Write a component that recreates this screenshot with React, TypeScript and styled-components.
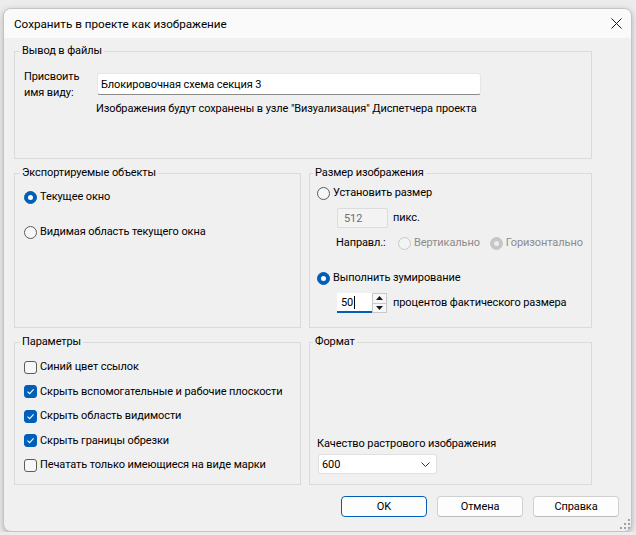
import styled, { createGlobalStyle } from 'styled-components'

const GlobalStyle = createGlobalStyle`
  html, body {
    margin: 0;
    padding: 0;
    background: #ececec;
    font-family: Roboto, "Noto Sans", sans-serif;
    font-size: 11px;
    letter-spacing: -0.1px;
    color: #000;
  }
  * { box-sizing: border-box; }
`

const Window = styled.div`
  position: relative;
  margin: 8px 0 0 3px;
  width: 629px;
  height: 524px;
  border: 1px solid #c4c4c4;
  border-radius: 8px;
  overflow: hidden;
  background: #f0f0f0;
  box-shadow: 0 2px 6px rgba(0, 0, 0, 0.25);
  display: flex;
  flex-direction: column;
`

const TitleBar = styled.div`
  height: 29px;
  background: #fafafa;
  display: flex;
  align-items: center;
  justify-content: space-between;
  padding: 0 9px 0 10px;
`

const Title = styled.span`
  font-size: 11.7px;
  letter-spacing: 0;
  line-height: 16px;
`

const CloseBtn = styled.div`
  width: 12px;
  height: 12px;
  display: flex;
  align-items: center;
  justify-content: center;
`

const Body = styled.div`
  padding: 6px 12px 0 10px;
  display: flex;
  flex-direction: column;
`

const Groups = styled.div`
  width: 578px;
  display: flex;
  flex-direction: column;
  gap: 7px;
`

const Grid = styled.div`
  display: grid;
  grid-template-columns: 287px 283px;
  grid-template-rows: 162px 150px;
  column-gap: 8px;
  row-gap: 7px;
`

const Group = styled.fieldset<{ $h?: number; $pl?: number; $pt?: number }>`
  margin: 0;
  padding: ${p => p.$pt ?? 0}px 8px 0 ${p => p.$pl ?? 9}px;
  border: 1px solid #dadada;
  min-width: 0;
  height: ${p => (p.$h ? `${p.$h}px` : '100%')};
`

const Legend = styled.legend`
  padding: 0 2px;
  margin-left: -4px;
  line-height: 14px;
  font-size: 11px;
`

const NameRow = styled.div`
  display: flex;
  align-items: flex-start;
`

const NameLabel = styled.div`
  width: 73px;
  line-height: 16px;
`

const TextInput = styled.div`
  margin-top: 4px;
  width: 384px;
  height: 22px;
  background: #fff;
  border: 1px solid #e6e6e6;
  border-bottom-color: #8a8a8a;
  border-radius: 3px;
  padding-left: 3px;
  display: flex;
  align-items: center;
`

const Note = styled.div`
  margin-left: 72px;
  line-height: 16px;
`

const Option = styled.label<{ $mt?: number; $ml?: number; $disabled?: boolean }>`
  display: flex;
  align-items: center;
  gap: 3px;
  height: 16px;
  line-height: 16px;
  margin-top: ${p => p.$mt ?? 0}px;
  margin-left: ${p => p.$ml ?? 0}px;
  color: ${p => (p.$disabled ? '#8c8c8c' : '#000')};
  white-space: nowrap;
`

const RadioMark = styled.span<{ $on?: boolean; $disabled?: boolean }>`
  width: 13px;
  height: 13px;
  flex: none;
  border-radius: 50%;
  display: flex;
  align-items: center;
  justify-content: center;
  border: 1px solid
    ${p => (p.$on ? (p.$disabled ? '#c6c6c6' : '#005fb8') : p.$disabled ? '#c8c8c8' : '#5c5c5c')};
  background: ${p => (p.$on ? (p.$disabled ? '#c6c6c6' : '#005fb8') : p.$disabled ? '#f3f3f3' : '#f7f7f7')};
  &::after {
    content: '';
    display: ${p => (p.$on ? 'block' : 'none')};
    width: 5px;
    height: 5px;
    border-radius: 50%;
    background: ${p => (p.$disabled ? '#ececec' : '#fff')};
  }
`

const CheckMark = styled.span<{ $on?: boolean }>`
  width: 13px;
  height: 13px;
  flex: none;
  border-radius: 3px;
  display: flex;
  align-items: center;
  justify-content: center;
  border: 1px solid ${p => (p.$on ? '#005fb8' : '#5c5c5c')};
  background: ${p => (p.$on ? '#005fb8' : '#f7f7f7')};
`

const Row = styled.div<{ $mt?: number; $ml?: number }>`
  display: flex;
  align-items: center;
  margin-top: ${p => p.$mt ?? 0}px;
  margin-left: ${p => p.$ml ?? 0}px;
`

const DisabledBox = styled.div`
  width: 51px;
  height: 20px;
  border: 1px solid #dcdcdc;
  border-radius: 2px;
  background: #f3f3f3;
  color: #6d6d6d;
  padding-left: 6px;
  display: flex;
  align-items: center;
`

const Text = styled.span<{ $ml?: number; $w?: number }>`
  margin-left: ${p => p.$ml ?? 0}px;
  width: ${p => (p.$w ? `${p.$w}px` : 'auto')};
  line-height: 16px;
  white-space: nowrap;
`

const Radios = styled.div`
  display: flex;
  gap: 10px;
`

const SpinInput = styled.div`
  width: 35px;
  height: 20px;
  background: #fff;
  border-bottom: 2px solid #005fb8;
  padding-left: 4px;
  display: flex;
  align-items: center;
`

const Caret = styled.span`
  width: 1px;
  height: 13px;
  background: #000;
  margin-left: 1px;
`

const SpinButtons = styled.div`
  width: 15px;
  height: 20px;
  border: 1px solid #c8c8c8;
  background: #f7f7f7;
  display: flex;
  flex-direction: column;
`

const SpinHalf = styled.div<{ $top?: boolean }>`
  flex: 1;
  display: flex;
  align-items: center;
  justify-content: center;
  border-bottom: ${p => (p.$top ? '1px solid #c8c8c8' : 'none')};
`

const Checks = styled.div`
  display: flex;
  flex-direction: column;
  gap: 8.5px;
`

const FormatCol = styled.div`
  padding-top: 87px;
  display: flex;
  flex-direction: column;
  gap: 2px;
`

const Combo = styled.div`
  margin-left: 1px;
  width: 119px;
  height: 20px;
  background: #fff;
  border: 1px solid #e0e0e0;
  border-radius: 3px;
  padding: 0 6px 0 3px;
  display: flex;
  align-items: center;
  justify-content: space-between;
`

const Buttons = styled.div`
  margin-top: 11px;
  display: flex;
  justify-content: flex-end;
  gap: 10px;
`

const Button = styled.div<{ $primary?: boolean }>`
  width: 86px;
  height: 21px;
  background: #fdfdfd;
  border: 1px solid ${p => (p.$primary ? '#005fb8' : '#d0d0d0')};
  border-bottom-color: ${p => (p.$primary ? '#005fb8' : '#bcbcbc')};
  border-radius: 4px;
  display: flex;
  align-items: center;
  justify-content: center;
`

const Grip = styled.svg`
  position: absolute;
  right: 1px;
  bottom: 2px;
`

const Radio = ({ on, disabled, children, mt, ml }: { on?: boolean; disabled?: boolean; children: string; mt?: number; ml?: number }) => (
  <Option $mt={mt} $ml={ml} $disabled={disabled}>
    <RadioMark $on={on} $disabled={disabled} />
    {children}
  </Option>
)

const Check = ({ on, children }: { on?: boolean; children: string }) => (
  <Option>
    <CheckMark $on={on}>
      {on && (
        <svg width="9" height="9" viewBox="0 0 9 9">
          <path d="M1.5 4.6 L3.6 6.6 L7.6 2.4" fill="none" stroke="#fff" strokeWidth="1.1" />
        </svg>
      )}
    </CheckMark>
    {children}
  </Option>
)

const params = [
  { label: 'Синий цвет ссылок', on: false },
  { label: 'Скрыть вспомогательные и рабочие плоскости', on: true },
  { label: 'Скрыть область видимости', on: true },
  { label: 'Скрыть границы обрезки', on: true },
  { label: 'Печатать только имеющиеся на виде марки', on: false },
]

export default function App() {
  return (
    <>
      <GlobalStyle />
      <Window>
        <TitleBar>
          <Title>Сохранить в проекте как изображение</Title>
          <CloseBtn>
            <svg width="11" height="11" viewBox="0 0 11 11">
              <path d="M0.5 0.5 L10.5 10.5 M10.5 0.5 L0.5 10.5" stroke="#1a1a1a" strokeWidth="1" />
            </svg>
          </CloseBtn>
        </TitleBar>
        <Body>
          <Groups>
            <Group $h={115} $pt={11}>
              <Legend>Вывод в файлы</Legend>
              <NameRow>
                <NameLabel>
                  Присвоить
                  <br />
                  имя виду:
                </NameLabel>
                <TextInput>Блокировочная схема секция 3</TextInput>
              </NameRow>
              <Note>Изображения будут сохранены в узле "Визуализация" Диспетчера проекта</Note>
            </Group>
            <Grid>
              <Group $pt={9}>
                <Legend>Экспортируемые объекты</Legend>
                <Radio on>Текущее окно</Radio>
                <Radio mt={19}>Видимая область текущего окна</Radio>
              </Group>
              <Group $pl={7} $pt={5}>
                <Legend>Размер изображения</Legend>
                <Radio>Установить размер</Radio>
                <Row $mt={7} $ml={20}>
                  <DisabledBox>512</DisabledBox>
                  <Text $ml={5}>пикс.</Text>
                </Row>
                <Row $mt={7} $ml={19}>
                  <Text $w={62}>Направл.:</Text>
                  <Radios>
                    <Radio disabled>Вертикально</Radio>
                    <Radio disabled on>Горизонтально</Radio>
                  </Radios>
                </Row>
                <Radio on mt={19}>Выполнить зумирование</Radio>
                <Row $mt={7} $ml={20}>
                  <SpinInput>
                    50
                    <Caret />
                  </SpinInput>
                  <SpinButtons>
                    <SpinHalf $top>
                      <svg width="7" height="4" viewBox="0 0 7 4">
                        <path d="M0 4 L3.5 0 L7 4 Z" fill="#1a1a1a" />
                      </svg>
                    </SpinHalf>
                    <SpinHalf>
                      <svg width="7" height="4" viewBox="0 0 7 4">
                        <path d="M0 0 L3.5 4 L7 0 Z" fill="#1a1a1a" />
                      </svg>
                    </SpinHalf>
                  </SpinButtons>
                  <Text $ml={6}>процентов фактического размера</Text>
                </Row>
              </Group>
              <Group $pt={10}>
                <Legend>Параметры</Legend>
                <Checks>
                  {params.map(p => (
                    <Check key={p.label} on={p.on}>
                      {p.label}
                    </Check>
                  ))}
                </Checks>
              </Group>
              <Group $pl={7}>
                <Legend>Формат</Legend>
                <FormatCol>
                  <Text>Качество растрового изображения</Text>
                  <Combo>
                    600
                    <svg width="9" height="5" viewBox="0 0 9 5">
                      <path d="M0.5 0.5 L4.5 4.5 L8.5 0.5" fill="none" stroke="#333" strokeWidth="1" />
                    </svg>
                  </Combo>
                </FormatCol>
              </Group>
            </Grid>
          </Groups>
          <Buttons>
            <Button $primary>OK</Button>
            <Button>Отмена</Button>
            <Button>Справка</Button>
          </Buttons>
        </Body>
        <Grip width="10" height="10" viewBox="0 0 10 10">
          <rect x="8" y="0" width="2" height="2" fill="#a0a0a0" />
          <rect x="4" y="4" width="2" height="2" fill="#a0a0a0" />
          <rect x="8" y="4" width="2" height="2" fill="#a0a0a0" />
          <rect x="0" y="8" width="2" height="2" fill="#a0a0a0" />
          <rect x="4" y="8" width="2" height="2" fill="#a0a0a0" />
          <rect x="8" y="8" width="2" height="2" fill="#a0a0a0" />
        </Grip>
      </Window>
    </>
  )
}
